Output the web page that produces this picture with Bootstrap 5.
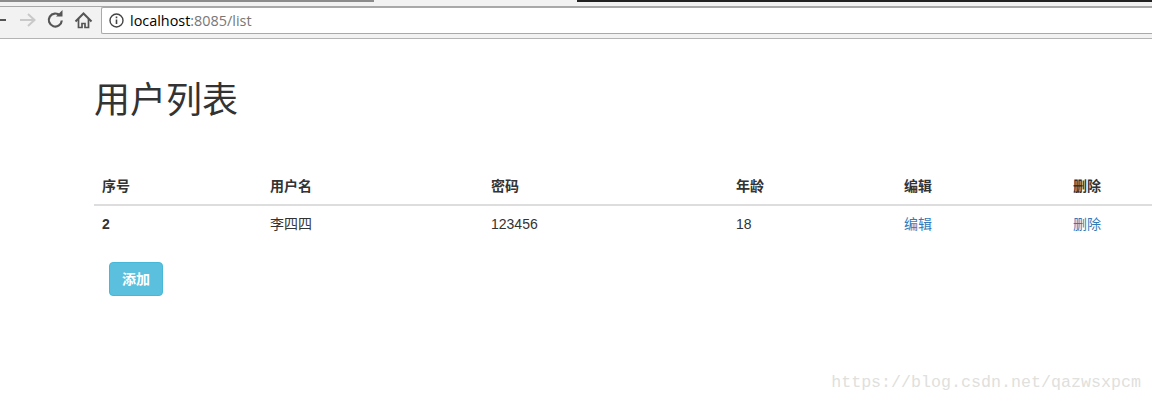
<!DOCTYPE html>
<html lang="zh">
<head>
    <meta charset="UTF-8">
    <title>用户列表</title>
    <link href="https://cdn.jsdelivr.net/npm/bootstrap@5.3.0/dist/css/bootstrap.min.css" rel="stylesheet">
    <style>
        html, body { height: 100%; overflow: hidden; }
        body {
            font-family: "Liberation Sans", "Noto Sans CJK SC", sans-serif;
            font-size: 14px;
            line-height: 20px;
            color: #333;
            background: #fff;
        }
        .tab-strip { height: 6px; background: #f2f2f2; }
        .tab-strip-left { width: 374px; height: 2px; background: #8c8c8c; }
        .tab-strip-gap { width: 203px; }
        .tab-strip-dark { height: 2px; background: #222; }
        .chrome-bar {
            height: 33px;
            background: #f2f2f2;
            border-top: 1px solid #a8a8a8;
            border-bottom: 1px solid #b4b4b4;
        }
        .nav-icons { width: 101px; height: 27px; flex: none; position: relative; }
        .nav-icons svg { position: absolute; left: 0; top: 0; }
        .url-box {
            flex: 1;
            height: 27px;
            background: #fff;
            border: 1px solid #a9a9a9;
            border-right: 0;
            border-radius: 2px 0 0 2px;
            font-family: "Open Sans", "Liberation Sans", sans-serif;
            font-size: 14.4px;
            color: #000;
            padding-left: 7px;
        }
        .url-box svg { margin-right: 6px; }
        .url-box span { color: #777; }
        .page-wrap { padding: 0 0 0 94px; width: 1170px; }
        .page-title {
            font-size: 36px;
            line-height: 40px;
            font-weight: 400;
            margin: 42px 0 0;
            height: 40px;
        }
        .user-table { margin: 47px 0 0; width: 1076px; table-layout: fixed; --bs-table-color: #333; }
        .user-table th, .user-table td {
            padding: 8px;
            line-height: 20px;
            font-size: 14px;
            border: 0;
        }
        .user-table thead th { border-bottom: 2px solid #ddd; padding-top: 7px; height: 37px; }
        .user-table tbody th, .user-table td { height: 37px; }
        .user-table a { color: #337ab7; text-decoration: none; }
        .add-btn {
            margin: 20px 0 0 15px;
            width: 54px;
            height: 34px;
            padding: 0;
            font-size: 14px;
            font-weight: 700;
            color: #fff;
            background: #5bc0de;
            border: 1px solid #46b8da;
            border-radius: 4px;
        }
        .watermark {
            position: absolute;
            right: 11px;
            bottom: 10px;
            font-family: "Liberation Mono", monospace;
            font-size: 16.67px;
            line-height: 18px;
            color: #e0e0dc;
            white-space: nowrap;
        }
    </style>
</head>
<body>
    <div class="d-flex tab-strip">
        <div class="tab-strip-left"></div>
        <div class="tab-strip-gap"></div>
        <div class="flex-grow-1 tab-strip-dark"></div>
    </div>
    <div class="d-flex align-items-start chrome-bar">
        <div class="nav-icons">
            <svg width="101" height="27" viewBox="0 0 101 27" fill="none">
                <path d="M0 13h6" stroke="#555" stroke-width="2"/>
                <path d="M20 13h14M28 7l6.500 6-6.500 6" stroke="#c9c9c9" stroke-width="2"/>
                <path d="M60 8.500a6.500 6.500 0 1 0 1.800 5" stroke="#555" stroke-width="2.200"/>
                <path d="M56 9.500h6.500V3z" fill="#555"/>
                <path d="M75.500 14.500L83.500 6.500l8 8" stroke="#555" stroke-width="2"/>
                <path d="M78.500 12V20.500H82v-4h3v4h3.500V12" stroke="#555" stroke-width="1.700"/>
            </svg>
        </div>
        <div class="url-box d-flex align-items-center">
            <svg width="15" height="15" viewBox="0 0 15 15" fill="none">
                <circle cx="7.500" cy="7.500" r="6.500" stroke="#444" stroke-width="1.400"/>
                <path d="M7.500 6.500v4.500M7.500 3.500v1.700" stroke="#444" stroke-width="1.600"/>
            </svg>
            localhost<span>:8085/list</span>
        </div>
    </div>
    <div class="page-wrap">
        <h1 class="page-title">用户列表</h1>
        <table class="table user-table">
            <colgroup>
                <col style="width:168px"><col style="width:221px"><col style="width:245px">
                <col style="width:168px"><col style="width:169px"><col style="width:105px">
            </colgroup>
            <thead>
                <tr><th>序号</th><th>用户名</th><th>密码</th><th>年龄</th><th>编辑</th><th>删除</th></tr>
            </thead>
            <tbody>
                <tr>
                    <th>2</th><td>李四四</td><td>123456</td><td>18</td>
                    <td><a href="#">编辑</a></td><td><a href="#">删除</a></td>
                </tr>
            </tbody>
        </table>
        <button type="button" class="btn add-btn">添加</button>
    </div>
    <div class="watermark">https://blog.csdn.net/qazwsxpcm</div>
</body>
</html>
